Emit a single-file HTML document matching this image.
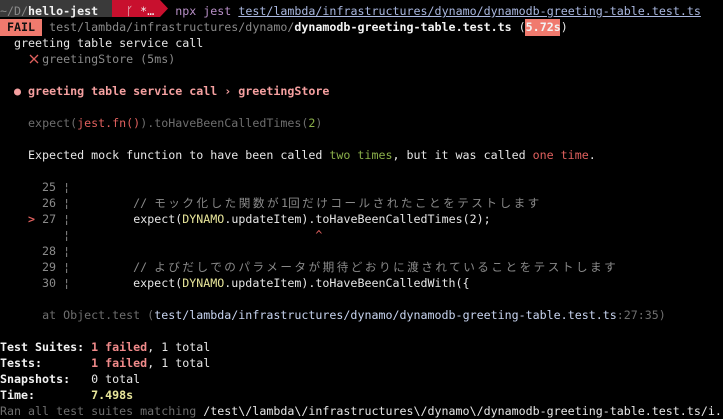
<!DOCTYPE html>
<html><head><meta charset="utf-8"><style>
html,body{margin:0;padding:0;background:#000;width:723px;height:419px;overflow:hidden}
pre{margin:0;position:absolute;left:0;top:3px;font-family:"DejaVu Sans Mono","Liberation Mono","Noto Sans CJK JP",monospace;font-size:11.65px;line-height:16px;color:#e6e6e6;white-space:pre}
.d{color:#8a8a8a}.dd{color:#6e6e6e}.w{color:#f2f2f2}.b{font-weight:bold}
.r{color:#f08a8a}.rr{color:#e0605e}.g{color:#8bb04a}.y{color:#e8e69a}.p{color:#f5a0a0}
.u{text-decoration:underline;color:#aab8e0}.lk{color:#c8d4f0}
.j{letter-spacing:2.5px;font-family:"Noto Sans CJK JP",sans-serif;font-size:11.6px}
.bar{position:absolute;top:0;height:17px}
</style></head><body>
<div class="bar" style="left:0;width:112px;background:#3a3a3a"></div>
<div class="bar" style="left:112px;width:48px;background:#c8102e"></div>
<svg class="bar" style="left:160px" width="9" height="17"><polygon points="0,0 8,8.5 0,17" fill="#c8102e"/></svg>
<div style="position:absolute;left:0;top:19px;width:42px;height:17px;background:#f07a6e"></div>
<div style="position:absolute;left:525px;top:19px;width:35px;height:17px;background:#f07a6e"></div>
<svg style="position:absolute;left:29px;top:54px" width="10" height="10"><path d="M1 1L9 9M9 1L1 9" stroke="#e0605e" stroke-width="1.3"/></svg>
<pre><span class="d">~/D/</span><span class="w b">hello-jest</span>  <span class="w">  ᚴ *…</span>   <span style="color:#b990c8">npx jest</span> <span class="u">test/lambda/infrastructures/dynamo/dynamodb-greeting-table.test.ts</span>
<span class="b" style="color:#111"> FAIL </span> <span class="d">test/lambda/infrastructures/dynamo/</span><span class="w b">dynamodb-greeting-table.test.ts</span> (<span class="w b">5.72s</span>)
  greeting table service call
      <span class="d">greetingStore (5ms)</span>

  <span class="p b">● greeting table service call › greetingStore</span>

    <span class="dd">expect(</span><span class="rr">jest.fn()</span><span class="dd">).toHaveBeenCalledTimes(</span><span class="g">2</span><span class="dd">)</span>

    Expected mock function to have been called <span class="g">two times</span>, but it was called <span class="rr">one time</span>.

<span class="d">      25 ¦ </span>
<span class="d">      26 ¦ </span><span class="d">        // <span class="j">モック化した関数が</span>1<span class="j">回だけコールされたことをテストします</span></span>
    <span class="rr b">&gt;</span><span class="d"> 27 ¦ </span>        expect(<span class="y">DYNAMO</span>.updateItem).toHaveBeenCalledTimes(2);
<span class="d">         ¦ </span>                                  <span class="rr">^</span>
<span class="d">      28 ¦ </span>
<span class="d">      29 ¦ </span><span class="d">        // <span class="j">よびだしでのパラメータが期待どおりに渡されていることをテストします</span></span>
<span class="d">      30 ¦ </span>        expect(<span class="y">DYNAMO</span>.updateItem).toHaveBeenCalledWith({

      <span class="dd">at Object.test (</span><span class="lk">test/lambda/infrastructures/dynamo/dynamodb-greeting-table.test.ts</span><span class="dd">:27:35)</span>

<span class="b w">Test Suites: </span><span class="r b">1 failed</span>, 1 total
<span class="b w">Tests:       </span><span class="r b">1 failed</span>, 1 total
<span class="b w">Snapshots:   </span>0 total
<span class="b w">Time:        </span><span class="y b">7.498s</span>
<span class="dd">Ran all test suites matching </span>/test\/lambda\/infrastructures\/dynamo\/dynamodb-greeting-table.test.ts/i.</pre>
</body></html>
